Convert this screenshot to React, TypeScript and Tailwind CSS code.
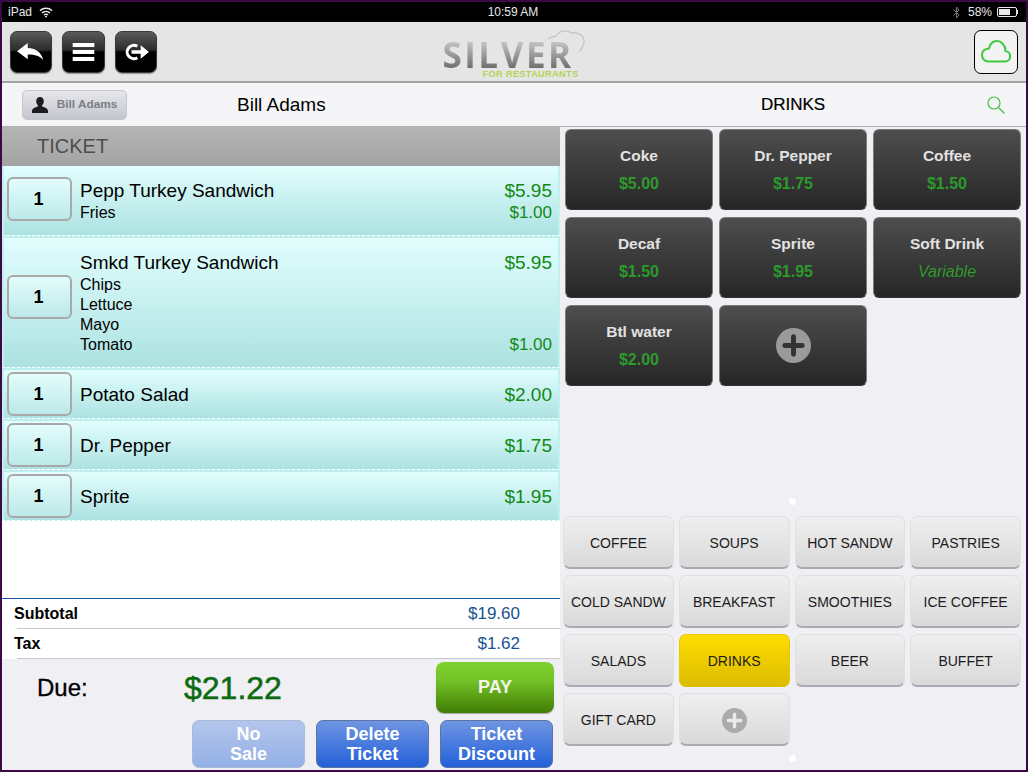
const font = { fontFamily: '"Liberation Sans", Arial, sans-serif' };

const ticketItems = [
  { qty: 1, name: "Pepp Turkey Sandwich", price: "$5.95", height: "h-[70px]", qtyTop: "mt-[11px]", mods: [{ name: "Fries", price: "$1.00" }] },
  {
    qty: 1,
    name: "Smkd Turkey Sandwich",
    price: "$5.95",
    height: "h-[130px]",
    qtyTop: "mt-[37px]",
    mods: [
      { name: "Chips", price: "" },
      { name: "Lettuce", price: "" },
      { name: "Mayo", price: "" },
      { name: "Tomato", price: "$1.00" },
    ],
  },
  { qty: 1, name: "Potato Salad", price: "$2.00", height: "h-[49px]", qtyTop: "mt-[2px]", mods: [] },
  { qty: 1, name: "Dr. Pepper", price: "$1.75", height: "h-[49px]", qtyTop: "mt-[2px]", mods: [] },
  { qty: 1, name: "Sprite", price: "$1.95", height: "h-[49px]", qtyTop: "mt-[2px]", mods: [] },
];

const products = [
  { name: "Coke", price: "$5.00" },
  { name: "Dr. Pepper", price: "$1.75" },
  { name: "Coffee", price: "$1.50" },
  { name: "Decaf", price: "$1.50" },
  { name: "Sprite", price: "$1.95" },
  { name: "Soft Drink", price: "Variable" },
  { name: "Btl water", price: "$2.00" },
];

const categories = [
  "COFFEE",
  "SOUPS",
  "HOT SANDW",
  "PASTRIES",
  "COLD SANDW",
  "BREAKFAST",
  "SMOOTHIES",
  "ICE COFFEE",
  "SALADS",
  "DRINKS",
  "BEER",
  "BUFFET",
  "GIFT CARD",
];

function PlusDisc({ size, disc, bar }: { size: number; disc: string; bar: string }) {
  return (
    <svg width={size} height={size} viewBox="0 0 36 36">
      <circle cx="18" cy="18" r="18" fill={disc} />
      <path d="M18 9v18M9 18h18" stroke={bar} strokeWidth="5" strokeLinecap="round" />
    </svg>
  );
}

function ToolButton({ children, width }: { children: React.ReactNode; width: string }) {
  return (
    <button
      className={`relative flex h-[42px] ${width} items-center justify-center overflow-hidden rounded-[7px] border border-[#3a3a3a] bg-[linear-gradient(#5a5a5a_0%,#2c2c2c_45%,#000_50%,#000_100%)] shadow-[0_1px_1px_rgba(0,0,0,0.35)]`}
    >
      {children}
    </button>
  );
}

function TicketRow({ item }: { item: (typeof ticketItems)[number] }) {
  return (
    <div
      className={`flex ${item.height} shrink-0 items-start gap-[8px] border-x-2 border-x-[#c2f0ee] border-b border-b-white bg-[linear-gradient(#e1fefd,#ade2e2)] bg-clip-padding pl-[3px] pr-[6px] [border-bottom-style:dashed]`}
    >
      <div
        className={`flex h-[44px] w-[65px] shrink-0 ${item.qtyTop} items-center justify-center rounded-[6px] border-2 border-[#a9a9a9] bg-[linear-gradient(#e2fdfc,#bce9e8)] pr-[2px] text-[18px] font-bold text-black`}
      >
        {item.qty}
      </div>
      <div className="min-w-0 flex-1 pt-[13px]">
        <div className="flex items-center justify-between text-[19px] leading-[24px] text-black">
          <span>{item.name}</span>
          <span className="text-[#118a16]">{item.price}</span>
        </div>
        {item.mods.map((mod) => (
          <div key={mod.name} className="flex items-center justify-between text-[16px] leading-[20px] text-black">
            <span>{mod.name}</span>
            <span className="text-[17px] text-[#118a16]">{mod.price}</span>
          </div>
        ))}
      </div>
    </div>
  );
}

function ActionButton({ top, bottom, muted }: { top: string; bottom: string; muted?: boolean }) {
  return (
    <button
      className={`flex h-[48px] w-[113px] flex-col items-center justify-center rounded-[7px] border text-[18px] font-bold leading-[20px] text-white ${
        muted
          ? "border-[#a9b9d8] bg-[linear-gradient(#b3c6ec,#94b0e6)]"
          : "border-[#5c74a4] bg-[linear-gradient(#6f95e2,#2360d8)]"
      }`}
    >
      <span>{top}</span>
      <span>{bottom}</span>
    </button>
  );
}

function ProductTile({ children }: { children: React.ReactNode }) {
  return (
    <div className="flex h-[81px] flex-col items-center justify-center rounded-[6px] border border-[#7c7c7c] border-b-[#333] bg-[linear-gradient(#4e4e4e,#262626)]">
      {children}
    </div>
  );
}

function CategoryTile({ label, active }: { label?: string; active?: boolean }) {
  return (
    <div
      className={`flex h-[53px] items-center justify-center rounded-[7px] border-x border-t text-[14px] text-[#1c1c1c] ${
        active
          ? "border-[#e8c800] bg-[linear-gradient(#ffdd00,#dbbb00)] pt-[1px]"
          : "border-[#e0e0e2] border-b-2 border-b-[#aaaab0] bg-[linear-gradient(#efeff0,#d9d9da)] pt-[2px]"
      }`}
    >
      {label ?? <PlusDisc size={25} disc="#ababab" bar="#e9e9e9" />}
    </div>
  );
}

function Dot() {
  return <div className="h-[7px] w-[7px] rounded-full bg-white" />;
}

export default function App() {
  return (
    <div style={font} className="flex h-[772px] w-[1028px] flex-col overflow-hidden border-x-2 border-y-2 border-[#3b0a45] bg-[#efeff4]">
      {/* status bar */}
      <div className="grid h-[20px] shrink-0 grid-cols-3 items-center bg-black pl-[6px] pr-[8px] text-[12px] text-[#e8e8e8]">
        <div className="flex items-center gap-[7px]">
          <span>iPad</span>
          <svg width="14" height="11" viewBox="0 0 14 11" fill="none" stroke="#e8e8e8" strokeWidth="1.5">
            <path d="M1 3.6c3.4-3 8.6-3 12 0M3 5.9c2.3-2 5.7-2 8 0M5 8c1.2-1 2.8-1 4 0" />
            <path d="M7 10.800 5.800 9.400c.7-.5 1.700-.5 2.400 0z" fill="#e8e8e8" stroke="none" />
          </svg>
        </div>
        <div className="text-center">10:59 AM</div>
        <div className="flex items-center justify-end gap-[5px]">
          <svg className="mr-[3px]" width="7" height="13" viewBox="0 0 7 13" fill="none" stroke="#777" strokeWidth="1">
            <path d="M.5 3.500 6 9 3.500 12V1L6 4 .5 9.500" />
          </svg>
          <span>58%</span>
          <div className="flex items-center">
            <div className="h-[10px] w-[20px] rounded-[2px] border border-[#e8e8e8] p-[1px]">
              <div className="h-full w-[11px] bg-[#e8e8e8]" />
            </div>
            <div className="h-[4px] w-[1px] bg-[#e8e8e8]" />
          </div>
        </div>
      </div>

      {/* toolbar */}
      <div className="grid h-[61px] shrink-0 grid-cols-[1fr_auto_1fr] items-center border-b-2 border-[#a3a3a3] bg-[#e5e5e5] pl-[8px] pr-[8px]">
        <div className="flex gap-[10px]">
          <ToolButton width="w-[42px]">
            <svg width="28" height="18" viewBox="0 0 34 22">
              <path d="M0 10 13 0v6c9 0 17 5 19 15-4-5-10-7-19-7v6z" fill="#fff" />
            </svg>
          </ToolButton>
          <ToolButton width="w-[43px]">
            <svg width="23" height="18" viewBox="0 0 24 20" fill="#fff">
              <rect y="0" width="24" height="4.500" />
              <rect y="7.700" width="24" height="4.500" />
              <rect y="15.500" width="24" height="4.500" />
            </svg>
          </ToolButton>
          <ToolButton width="w-[42px]">
            <svg width="27" height="20" viewBox="0 0 32 24" fill="none">
              <path d="M17 5.200A8 8 0 1 0 17 18.800" stroke="#fff" strokeWidth="3.600" />
              <path d="M10 10h11V4l10 8-10 8v-6H10z" fill="#fff" />
            </svg>
          </ToolButton>
        </div>

        <div className="relative flex h-[56px] w-[137px] -translate-x-[3px] flex-col items-center justify-end">
          <svg className="absolute right-[-8px] top-[4px]" width="42" height="25" viewBox="0 0 44 28" fill="none" stroke="#c4c4c4" strokeWidth="1.400">
            <path d="M1 12c3-2 6-3 9-3 3-6 12-8 17-3 2-1 5-1 7 0 5 1 8 6 7 11-1 4-3 7-5 9" />
          </svg>
          <div
            className="self-start whitespace-nowrap bg-[linear-gradient(#c4c4c4,#6f6f6f)] bg-clip-text text-[35px] leading-[26px] tracking-[2.500px] text-transparent"
            style={{ fontFamily: '"Open Sans", sans-serif', fontWeight: 700 }}
          >
            SILVER
          </div>
          <div className="self-end pr-[1px] text-[9.200px] font-bold leading-[12px] tracking-[0.350px] text-[#b4d455]">FOR RESTAURANTS</div>
        </div>

        <div className="flex justify-end">
          <button className="flex h-[44px] w-[44px] items-center justify-center rounded-[7px] border border-black bg-[#f3f3f3]">
            <svg width="30" height="23" viewBox="0 0 30 23" fill="none" stroke="#3fc93f" strokeWidth="2">
              <path d="M7 21.500h17c7 0 6.500-10 .5-10.500C24.500 5 20 1 16 1c-4 0-7 3-8 7.500C3 9 1 12 1 15c0 4 3 6.500 6 6.500z" />
            </svg>
          </button>
        </div>
      </div>

      {/* nav bar */}
      <div className="flex h-[44px] shrink-0 items-center border-b border-[#b0b0b0] bg-[#f5f5f7]">
        <button className="ml-[20px] flex h-[30px] w-[105px] items-center justify-center gap-[9px] rounded-[5px] border border-[#c5c5cc] bg-[linear-gradient(#e6e7ec,#c4c6ce)] text-[11.800px] font-bold text-[#7d7d82]">
          <svg width="16" height="16" viewBox="0 0 16 16" fill="#1c1c1c">
            <path d="M8 0c2.400 0 3.800 1.900 3.800 4.300 0 1.700-.7 3.100-1.700 4v1.300c2 .6 5.900 1.900 5.900 4.400v2H0v-2c0-2.500 3.900-3.800 5.900-4.400V8.300c-1-.9-1.700-2.300-1.700-4C4.200 1.900 5.600 0 8 0z" />
          </svg>
          Bill Adams
        </button>
        <div className="ml-[110px] w-[300px] text-[19px] leading-none text-black">Bill Adams</div>
        <div className="ml-[181px] w-[150px] text-center text-[17px] leading-none text-black [-webkit-text-stroke:0.2px_black]">DRINKS</div>
        <svg className="ml-[119px]" width="18" height="18" viewBox="0 0 18 18" fill="none" stroke="#46c24a" strokeWidth="1.200">
          <circle cx="7" cy="7" r="6" />
          <path d="m11.500 11.500 6 6" />
        </svg>
      </div>

      {/* main */}
      <div className="flex min-h-0 flex-1">
        <div className="flex w-[558px] shrink-0 flex-col bg-white">
          <div className="flex h-[39px] shrink-0 items-center bg-[linear-gradient(#b5b5b5,#a3a3a3)] pb-[1px] pl-[35px] text-[20px] text-[#4d4d4d]">TICKET</div>
          <div className="flex flex-col gap-[2px] bg-[#bfeeee]">
            {ticketItems.map((item) => (
              <TicketRow key={item.name} item={item} />
            ))}
          </div>
          <div className="flex-1" />
          <div className="flex h-[30px] shrink-0 items-center justify-between border-t border-[#1a5a9a] pl-[12px] pr-[40px] text-[16px]">
            <span className="font-bold text-black">Subtotal</span>
            <span className="text-[17px] text-[#1a5390]">$19.60</span>
          </div>
          <div className="ml-[15px] h-px shrink-0 bg-[#c8c8c8]" />
          <div className="flex h-[29px] shrink-0 items-center justify-between pl-[12px] pr-[40px] text-[16px]">
            <span className="font-bold text-black">Tax</span>
            <span className="text-[17px] text-[#1a5390]">$1.62</span>
          </div>
          <div className="ml-[15px] h-px shrink-0 bg-[#c8c8c8]" />
          <div className="flex h-[111px] shrink-0 flex-col bg-[#efeff4] pr-[7px]">
            <div className="mt-[3px] flex items-center">
              <span className="ml-[35px] w-[147px] text-[24px] text-black [-webkit-text-stroke:0.3px_black]">Due:</span>
              <span className="text-[32px] leading-none text-[#0e6a11] [-webkit-text-stroke:0.5px_#0e6a11]">$21.22</span>
              <button className="ml-auto -mr-px flex h-[51px] w-[118px] items-center justify-center rounded-[8px] bg-[linear-gradient(#7dd12c_0%,#74c428_35%,#417c05_100%)] text-[18px] font-bold text-[#f2f5e8] shadow-[0_1px_1px_rgba(0,0,0,0.3)]">
                PAY
              </button>
            </div>
            <div className="mt-[7px] flex justify-end gap-[11px]">
              <ActionButton top="No" bottom="Sale" muted />
              <ActionButton top="Delete" bottom="Ticket" />
              <ActionButton top="Ticket" bottom="Discount" />
            </div>
          </div>
        </div>

        <div className="flex flex-1 flex-col items-stretch pl-[3px] pr-[5px]">
          <div className="mt-[2px] grid grid-cols-3 gap-x-[6px] gap-y-[7px] pl-[2px]">
            {products.map((product) => (
              <ProductTile key={product.name}>
                <span className="text-[15.500px] font-bold leading-[18px] text-[#e2e2e2]">{product.name}</span>
                <span className={`mt-[10px] text-[16px] leading-[18px] text-[#2d9a2d] ${product.price === "Variable" ? "italic" : "font-bold"}`}>
                  {product.price}
                </span>
              </ProductTile>
            ))}
            <ProductTile>
              <PlusDisc size={35} disc="#9a9a9a" bar="#333" />
            </ProductTile>
          </div>
          <div className="mt-[112px] flex justify-center">
            <Dot />
          </div>
          <div className="mt-[11px] grid grid-cols-4 gap-x-[5px] gap-y-[6px]">
            {categories.map((label) => (
              <CategoryTile key={label} label={label} active={label === "DRINKS"} />
            ))}
            <CategoryTile />
          </div>
          <div className="mt-[9px] flex justify-center">
            <Dot />
          </div>
        </div>
      </div>
    </div>
  );
}
